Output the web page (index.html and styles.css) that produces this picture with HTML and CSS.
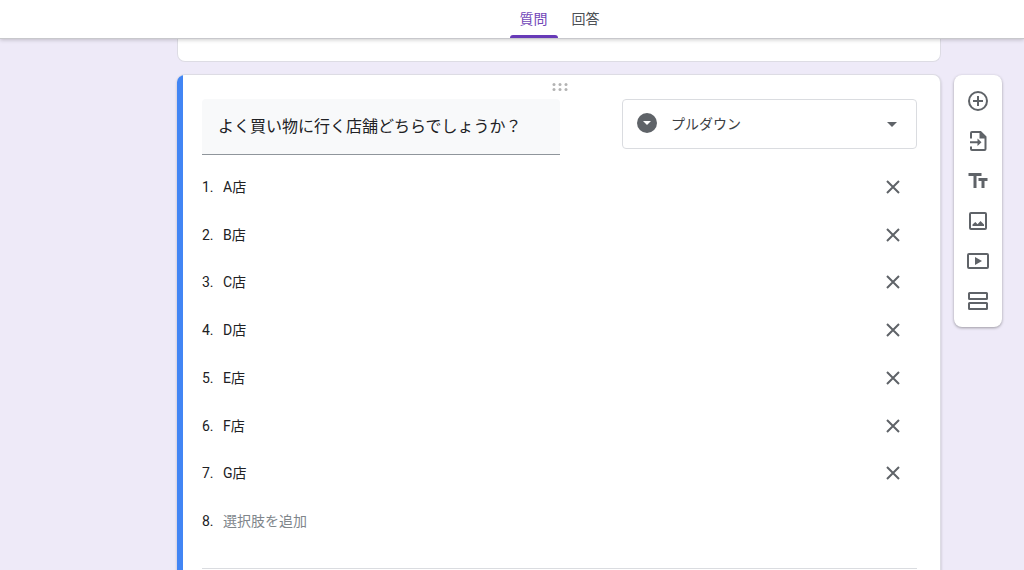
FILE: index.html
```html
<!DOCTYPE html>
<html lang="ja">
<head>
<meta charset="utf-8">
<meta name="viewport" content="width=device-width, initial-scale=1">
<title>フォーム</title>
<link rel="stylesheet" href="styles.css">
</head>
<body>
<header class="topbar">
  <nav class="tabs">
    <a class="tab tab-active" href="#questions">質問</a>
    <a class="tab" href="#responses">回答</a>
  </nav>
</header>
<main class="workspace" id="questions">
  <div class="form-column">
    <section class="card card-previous"></section>
    <section class="card card-question">
      <svg class="drag-handle" viewBox="0 0 16 8" aria-hidden="true"><circle cx="2" cy="1.6" r="1.5"/><circle cx="8" cy="1.6" r="1.5"/><circle cx="14" cy="1.6" r="1.5"/><circle cx="2" cy="6.4" r="1.5"/><circle cx="8" cy="6.4" r="1.5"/><circle cx="14" cy="6.4" r="1.5"/></svg>
      <div class="question-row">
        <input class="question-title" type="text" aria-label="質問" value="よく買い物に行く店舗どちらでしょうか？">
        <div class="type-picker">
          <svg class="type-icon" viewBox="0 0 20 20" aria-hidden="true"><circle cx="10" cy="10" r="10"/><path fill="#fff" d="M6 8h8l-4 4z"/></svg>
          <select class="type-select" aria-label="質問の形式"><option>プルダウン</option></select>
          <svg class="type-arrow" viewBox="0 0 10 5" aria-hidden="true"><path d="M0 0h10L5 5z"/></svg>
        </div>
      </div>
      <ol class="options">
        <li class="option"><span class="number">1.</span><input class="option-text" type="text" aria-label="選択肢 1" value="A店"><button class="remove" type="button" aria-label="選択肢 1 を削除"><svg viewBox="0 0 14 14"><path d="M1 1l12 12M13 1L1 13"/></svg></button></li>
        <li class="option"><span class="number">2.</span><input class="option-text" type="text" aria-label="選択肢 2" value="B店"><button class="remove" type="button" aria-label="選択肢 2 を削除"><svg viewBox="0 0 14 14"><path d="M1 1l12 12M13 1L1 13"/></svg></button></li>
        <li class="option"><span class="number">3.</span><input class="option-text" type="text" aria-label="選択肢 3" value="C店"><button class="remove" type="button" aria-label="選択肢 3 を削除"><svg viewBox="0 0 14 14"><path d="M1 1l12 12M13 1L1 13"/></svg></button></li>
        <li class="option"><span class="number">4.</span><input class="option-text" type="text" aria-label="選択肢 4" value="D店"><button class="remove" type="button" aria-label="選択肢 4 を削除"><svg viewBox="0 0 14 14"><path d="M1 1l12 12M13 1L1 13"/></svg></button></li>
        <li class="option"><span class="number">5.</span><input class="option-text" type="text" aria-label="選択肢 5" value="E店"><button class="remove" type="button" aria-label="選択肢 5 を削除"><svg viewBox="0 0 14 14"><path d="M1 1l12 12M13 1L1 13"/></svg></button></li>
        <li class="option"><span class="number">6.</span><input class="option-text" type="text" aria-label="選択肢 6" value="F店"><button class="remove" type="button" aria-label="選択肢 6 を削除"><svg viewBox="0 0 14 14"><path d="M1 1l12 12M13 1L1 13"/></svg></button></li>
        <li class="option"><span class="number">7.</span><input class="option-text" type="text" aria-label="選択肢 7" value="G店"><button class="remove" type="button" aria-label="選択肢 7 を削除"><svg viewBox="0 0 14 14"><path d="M1 1l12 12M13 1L1 13"/></svg></button></li>
        <li class="option"><span class="number">8.</span><input class="option-text" type="text" aria-label="選択肢を追加" placeholder="選択肢を追加"></li>
      </ol>
      <footer class="card-footer"></footer>
    </section>
  </div>
  <aside class="toolbar">
    <button class="tool" type="button" aria-label="質問を追加"><svg viewBox="0 0 24 24"><circle class="line" cx="12" cy="12" r="9"/><path class="line" d="M12 7v10M7 12h10"/></svg></button>
    <button class="tool" type="button" aria-label="質問をインポート"><svg viewBox="0 0 24 24"><path class="line" d="M5 9.500V4Q5 3 6 3H14.500L19.500 8V20Q19.500 21 18.500 21H6Q5 21 5 20V17.500"/><path d="M13.500 2.500V9.500H20zM11.500 9.500L15.500 13.300L11.500 17V14.300H4V12.300H11.500z"/></svg></button>
    <button class="tool" type="button" aria-label="タイトルと説明を追加"><svg viewBox="0 0 24 24"><path d="M2.500 4H15.500V7H10.500V19H7.500V7H2.500zM12.500 9H21.500V12H18.500V19H15.500V12H12.500z"/></svg></button>
    <button class="tool" type="button" aria-label="画像を追加"><svg viewBox="0 0 24 24"><rect class="line" x="4" y="4" width="16" height="16" rx="1"/><path d="M6.500 17V15.500L9.300 13L11.600 15.300L14.500 12L18 15.500V17z"/></svg></button>
    <button class="tool" type="button" aria-label="動画を追加"><svg viewBox="0 0 24 24"><rect class="line" x="2" y="5" width="20" height="14" rx="1"/><path d="M9 8L16 12L9 16z"/></svg></button>
    <button class="tool" type="button" aria-label="セクションを追加"><svg viewBox="0 0 24 24"><rect class="line" x="3" y="4" width="18" height="6" rx=".5"/><rect class="line" x="3" y="14" width="18" height="6" rx=".5"/></svg></button>
  </aside>
</main>
</body>
</html>
```

FILE: styles.css
```css
* {
  box-sizing: border-box;
}

body {
  margin: 0;
  height: 100vh;
  overflow: hidden;
  display: flex;
  flex-direction: column;
  background: #eeeaf8;
  color: #202124;
  font: 14px/20px Roboto, "Noto Sans CJK JP", sans-serif;
}

button,
input,
select {
  font: inherit;
  color: inherit;
  border: 0;
  padding: 0;
  background: none;
}

.topbar {
  position: relative;
  z-index: 1;
  flex: none;
  padding: 0 82px 0 177px;
  background: #fff;
  border-bottom: 1px solid #c8c8cc;
  box-shadow: 0 1px 4px rgba(0, 0, 0, 0.2);
}

.tabs {
  display: flex;
  justify-content: center;
}

.tab {
  position: relative;
  padding: 9px 12px;
  color: #4d5156;
  text-decoration: none;
}

.tab-active {
  color: #7248b9;
}

.tab-active::after {
  content: "";
  position: absolute;
  left: 2px;
  right: 2px;
  bottom: 0;
  height: 3px;
  border-radius: 3px 3px 0 0;
  background: #673ab7;
}

.workspace {
  flex: 1;
  min-height: 0;
  display: flex;
  align-items: flex-start;
  gap: 13px;
  padding: 0 22px 0 177px;
}

.form-column {
  flex: 1;
  min-width: 0;
  display: flex;
  flex-direction: column;
  gap: 12px;
}

.card {
  background: #fff;
  border: 1px solid #dddce4;
  border-radius: 8px;
}

.card-previous {
  padding-top: 22px;
  border-top: 0;
  border-radius: 0 0 8px 8px;
}

.card-question {
  position: relative;
  overflow: hidden;
  display: flex;
  flex-direction: column;
  padding: 8px 23px 0 25px;
  border-left: 0;
  box-shadow: 0 2px 3px rgba(0, 0, 0, 0.2);
}

.card-question::before {
  content: "";
  position: absolute;
  top: 0;
  bottom: 0;
  left: 0;
  width: 6px;
  background: #4285f4;
}

.drag-handle {
  align-self: center;
  width: 16px;
  height: 8px;
  fill: #b3b3b3;
}

.question-row {
  display: flex;
  justify-content: space-between;
  align-items: flex-start;
  padding-top: 8px;
}

.question-title {
  width: 50%;
  padding: 16px 16px 15px;
  line-height: 24px;
  font-size: 16px;
  background: #f8f9fa;
  border-bottom: 1px solid #8f959b;
  border-radius: 4px 4px 0 0;
}

.type-picker {
  position: relative;
  width: 295px;
}

.type-select {
  appearance: none;
  display: block;
  width: 100%;
  padding: 14px 40px 14px 48px;
  border: 1px solid #dadce0;
  border-radius: 4px;
  color: #3c4043;
}

.type-icon,
.type-arrow {
  position: absolute;
  fill: #5f6368;
  pointer-events: none;
}

.type-icon {
  top: 14px;
  left: 15px;
  width: 20px;
}

.type-arrow {
  top: 23px;
  right: 20px;
  width: 10px;
}

.options {
  display: grid;
  grid-auto-rows: 1fr;
  min-height: 382px;
  margin: 8px 0 0;
  padding: 0;
  list-style: none;
}

.option {
  display: flex;
  align-items: center;
}

.number {
  width: 21px;
}

.option-text {
  flex: 1;
  min-width: 0;
}

.option-text::placeholder {
  color: #80868b;
  opacity: 1;
}

.remove {
  display: flex;
  padding: 12px 17px;
}

.remove svg {
  width: 14px;
  height: 14px;
  fill: none;
  stroke: #5f6368;
  stroke-width: 2;
}

.card-footer {
  margin-top: 23px;
  min-height: 60px;
  border-top: 1px solid #dadce0;
}

.toolbar {
  flex: none;
  width: 48px;
  margin-top: 36px;
  padding: 6px 0;
  display: flex;
  flex-direction: column;
  background: #fff;
  border-radius: 8px;
  box-shadow: 0 1px 3px rgba(0, 0, 0, 0.35);
}

.tool {
  display: flex;
  justify-content: center;
  padding: 8px 0;
}

.tool svg {
  width: 24px;
  height: 24px;
  fill: #5f6368;
}

.tool .line {
  fill: none;
  stroke: #5f6368;
  stroke-width: 2;
}
```
